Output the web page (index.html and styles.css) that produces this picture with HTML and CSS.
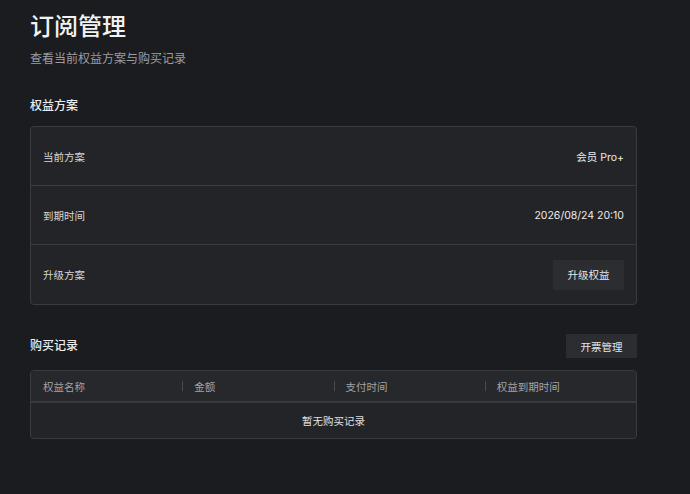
FILE: index.html
```html
<!DOCTYPE html>
<html lang="zh-CN">
<head>
<meta charset="utf-8">
<title>订阅管理</title>
<link rel="stylesheet" href="styles.css">
</head>
<body>
<main class="page">
  <h1 class="title">订阅管理</h1>
  <p class="subtitle">查看当前权益方案与购买记录</p>

  <h2 class="section-title plan-title">权益方案</h2>
  <div class="card">
    <div class="row">
      <span class="label">当前方案</span>
      <span class="value">会员 Pro+</span>
    </div>
    <div class="row">
      <span class="label">到期时间</span>
      <span class="value">2026/08/24 20:10</span>
    </div>
    <div class="row">
      <span class="label">升级方案</span>
      <button class="btn btn-upgrade">升级权益</button>
    </div>
  </div>

  <div class="section-head">
    <h2 class="section-title">购买记录</h2>
    <button class="btn btn-invoice">开票管理</button>
  </div>
  <div class="table">
    <div class="thead">
      <div class="th">权益名称</div>
      <div class="th">金额</div>
      <div class="th">支付时间</div>
      <div class="th">权益到期时间</div>
    </div>
    <div class="tbody">暂无购买记录</div>
  </div>
</main>
</body>
</html>
```

FILE: styles.css
```css
* { box-sizing: border-box; }
html, body {
  margin: 0;
  background: #1b1c1f;
}
body {
  font-family: "Inter", "Noto Sans CJK SC", sans-serif;
  color: #e6e6e8;
}
.page {
  width: 667px;
  padding: 10px 30px 40px;
}
.title {
  margin: 0;
  font-size: 24px;
  line-height: 34px;
  font-weight: 500;
  color: #f2f2f3;
}
.subtitle {
  margin: 6px 0 0;
  font-size: 12px;
  line-height: 18px;
  color: #9c9ca1;
}
.section-title {
  margin: 0;
  font-size: 12px;
  line-height: 18px;
  font-weight: 500;
  color: #ececee;
}
.plan-title {
  margin-top: 29px;
}
.card {
  margin-top: 11px;
  background: #232427;
  border: 1px solid #3a3b3f;
  border-radius: 4px;
}
.row {
  height: 59px;
  padding: 0 12px;
  display: flex;
  align-items: center;
  justify-content: space-between;
  font-size: 10.5px;
  border-bottom: 1px solid #3a3b3f;
}
.row:last-child {
  height: 59px;
  border-bottom: none;
}
.label { color: #d6d6d9; }
.value { color: #ececee; }
.btn {
  font-family: inherit;
  font-size: 10.5px;
  color: #e6e6e8;
  background: #2c2d31;
  border: none;
  border-radius: 0;
  padding: 0;
  width: 71px;
  cursor: pointer;
}
.btn-upgrade { height: 30px; }
.btn-invoice { height: 24px; }
.section-head {
  margin-top: 29px;
  display: flex;
  align-items: center;
  justify-content: space-between;
}
.table {
  margin-top: 12px;
  border: 1px solid #3a3b3f;
  border-radius: 4px;
  background: #232427;
  overflow: hidden;
}
.thead {
  display: grid;
  grid-template-columns: repeat(4, 1fr);
  height: 32px;
  background: #27282c;
  border-bottom: 2px solid #38393d;
  align-items: center;
}
.th {
  position: relative;
  padding: 0 12px;
  font-size: 10.5px;
  color: #a3a3a8;
}
.th + .th::before {
  content: "";
  position: absolute;
  left: 0;
  top: 50%;
  width: 1px;
  height: 10px;
  margin-top: -5px;
  background: #4a4b50;
}
.tbody {
  height: 35px;
  display: flex;
  align-items: center;
  justify-content: center;
  font-size: 10.5px;
  color: #e0e0e3;
}
```
